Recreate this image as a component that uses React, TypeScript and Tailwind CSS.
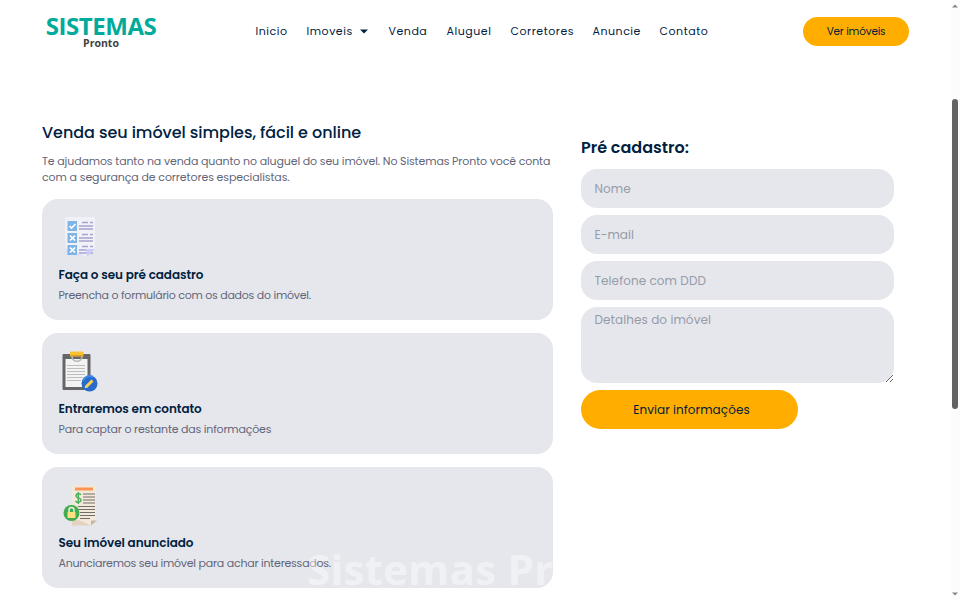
import React from "react";

const menu = [
  { label: "Inicio", style: "w-[51px]" },
  { label: "Imoveis", style: "w-[82px]", caret: true },
  { label: "Venda", style: "w-[58px]" },
  { label: "Aluguel", style: "w-[64px]" },
  { label: "Corretores", style: "w-[82px]" },
  { label: "Anuncie", style: "w-[67px]" },
  { label: "Contato", style: "w-[60px]" },
];

const ChecklistIcon = () => (
  <svg width="40" height="42" viewBox="0 0 40 42" className="block">
    <path d="M6 1h30v33l-8 7-22-3c2-6 0-12 0-18z" fill="#f1f2f8" />
    <path d="M6 32c7 3 15 5 22 9l-22-2z" fill="#dfe3fb" />
    {[5, 17, 29].map((y) => (
      <g key={y}>
        <rect x="8.500" y={y} width="9.500" height="10" fill="#7fb4e4" />
        <path d={`M20 ${y + 5}h14M20 ${y + 8}h14`} stroke="#a6a4ce" strokeWidth="1.400" />
        <path d={`M23 ${y + 1.5}h6m2 0h3`} stroke="#a6a4ce" strokeWidth="1.300" />
      </g>
    ))}
    <path d="M10.500 10l2 2 4-4" fill="none" stroke="#fff" strokeWidth="1.600" />
    <path d="M11 19.500l5 5m0-5l-5 5M11 31.500l5 5m0-5l-5 5" stroke="#fff" strokeWidth="1.700" />
    <path d="M27 33h9l-8 8z" fill="#ccccf8" />
  </svg>
);

const ClipboardIcon = () => (
  <svg width="40" height="42" viewBox="0 -1 40 42" className="block">
    <rect x="3.500" y="3" width="28" height="36" rx="1" fill="#666" />
    <rect x="6.500" y="8" width="22" height="28" fill="#f3f3f3" />
    <path d="M8 14.500h18M8 17.500h18M8 20.500h18M8 23.500h18M8 26.500h16M8 29.500h14" stroke="#bdbdbd" strokeWidth="1" />
    <path d="M13 5c0 7 10 7 10 0" fill="none" stroke="#b6b6b6" strokeWidth="1.600" />
    <rect x="11" y="0.500" width="13.500" height="5" rx="1" fill="#f9c02f" />
    <path d="M12 4.500h12" stroke="#df9b24" />
    <circle cx="30.500" cy="32.500" r="8" fill="#286bcd" />
    <path d="M24 30a7 7 0 0 1 10-4" fill="none" stroke="#3f87e4" strokeWidth="2" />
    <path d="M27 36l6.500-6.500" stroke="#ffd04b" strokeWidth="3" />
    <path d="M25.800 37.300l.6-2.200 1.600 1.500z" fill="#fff0d0" />
  </svg>
);

const ContractIcon = () => (
  <svg width="40" height="42" viewBox="-1 -0.500 40 42" className="block">
    <path d="M12 1h24v34l-5 6H12z" fill="#f3e9da" />
    <path d="M12 33c6 3 12 4 19 8H12z" fill="#e2d3bf" />
    <path d="M31 41v-5h6z" fill="#c8b7a4" />
    <rect x="15" y="3" width="18" height="3" fill="#fb9354" />
    <path d="M23 9.500h12M23 12.500h12M23 15.500h12M23 18.500h12M18 22h17M18 25h17M20 28h15M20 31h15M20 34h10" stroke="#706f6b" strokeWidth="1.200" />
    <path d="M21 10.500c-1-2-5-1.500-5 1s5 1.500 5 4-4 3-5.500 1M18.300 7.500v12" fill="none" stroke="#4cb25b" strokeWidth="1.500" />
    <circle cx="11.500" cy="28.500" r="8" fill="#43ab51" />
    <path d="M9 28v-2.500a2.500 2.500 0 0 1 5 0V28" fill="none" stroke="#e8f2df" strokeWidth="1.500" />
    <rect x="7.500" y="27.500" width="8" height="6" rx=".7" fill="#ffe184" />
  </svg>
);

const steps = [
  {
    icon: <ChecklistIcon />,
    title: "Faça o seu pré cadastro",
    text: "Preencha o formulário com os dados do imóvel.",
    textStyle: "tracking-[-0.25px]",
  },
  {
    icon: <ClipboardIcon />,
    title: "Entraremos em contato",
    text: "Para captar o restante das informações",
    textStyle: "tracking-[-0.2px]",
  },
  {
    icon: <ContractIcon />,
    title: "Seu imóvel anunciado",
    text: "Anunciaremos seu imóvel para achar interessados.",
    textStyle: "tracking-[-0.23px]",
  },
];

const fields = [
  { placeholder: "Nome", type: "text" },
  { placeholder: "E-mail", type: "email" },
  { placeholder: "Telefone com DDD", type: "tel" },
];

const Header = () => (
  <header className="flex h-[62px] items-start">
    <div className="ml-[42px] mt-[13px] flex w-[118px] flex-col items-center font-['Open_Sans',sans-serif] font-bold">
      <span className="text-[24px] leading-[25px] tracking-[-0.45px] text-[#00ab9b]">SISTEMAS</span>
      <span className="text-[10.5px] leading-[10px] text-[#414141]">Pronto</span>
    </div>
    <nav className="ml-[95.5px] mt-[23px] flex text-[11px] leading-4 tracking-[0.53px]">
      {menu.map((item) => (
        <a key={item.label} href="#" className={`flex shrink-0 items-center whitespace-nowrap ${item.style}`}>
          {item.label}
          {item.caret && (
            <svg width="8" height="5" viewBox="0 0 8 5" className="ml-[7px]">
              <path d="M0 .5h8L4 4.500z" fill="#00213f" />
            </svg>
          )}
        </a>
      ))}
    </nav>
    <button className="ml-[83.5px] mt-[17px] h-[29px] w-[106px] rounded-full bg-[#ffae00] pt-px text-[10.5px] tracking-[-0.2px]">
      Ver imóveis
    </button>
  </header>
);

const Scrollbar = () => (
  <div className="flex w-[9px] shrink-0 flex-col items-start bg-[#fcfcfc] pl-px">
    <svg width="6" height="4" viewBox="0 0 6 4" className="mt-1">
      <path d="M0 3.500L3 .5l3 3z" fill="#858585" />
    </svg>
    <div className="mt-[91px] h-[310px] w-[6px] rounded-full bg-[#636363]" />
    <svg width="6" height="4" viewBox="0 0 6 4" className="mt-[183px]">
      <path d="M0 .5h6l-3 3z" fill="#858585" />
    </svg>
  </div>
);

const App = () => {
  return (
    <div className="relative flex h-[600px] w-[960px] overflow-hidden bg-white font-['Poppins','Inter',sans-serif] text-[#00213f]">
      <div className="w-[951px] shrink-0">
        <Header />

        <main className="flex">
          {/* Steps */}
          <section className="ml-[42px] w-[511px] pt-[59px]">
            <h2 className="whitespace-nowrap text-[16px] font-medium leading-6 tracking-[-0.05px]">
              Venda seu imóvel simples, fácil e online
            </h2>
            <p className="mt-[8px] whitespace-nowrap text-[11px] leading-4 tracking-[-0.13px] text-[#626579]">
              Te ajudamos tanto na venda quanto no aluguel do seu imóvel. No Sistemas Pronto você conta
              <br />
              <span className="tracking-[-0.1px]">com a segurança de corretores especialistas.</span>
            </p>
            <div className="mt-[14px] flex flex-col gap-[13px]">
              {steps.map((step) => (
                <div key={step.title} className="h-[121px] rounded-2xl bg-[#e6e7ec] pl-[16.5px] pt-[17px]">
                  <div>{step.icon}</div>
                  <h3 className="mt-[9px] whitespace-nowrap text-[12px] font-semibold leading-4 tracking-[-0.07px]">
                    {step.title}
                  </h3>
                  <p className={`mt-[4px] whitespace-nowrap text-[11px] leading-4 text-[#626579] ${step.textStyle}`}>
                    {step.text}
                  </p>
                </div>
              ))}
            </div>
          </section>

          {/* Form */}
          <form className="ml-[28px] flex w-[313px] flex-col pt-[74px]">
            <h2 className="text-[16px] font-semibold leading-6">Pré cadastro:</h2>
            <div className="mt-[9px] flex flex-col gap-[7px] text-[12px] tracking-[0.08px]">
              {fields.map((field) => (
                <input
                  key={field.placeholder}
                  type={field.type}
                  placeholder={field.placeholder}
                  className="h-[39px] rounded-2xl bg-[#e6e7ec] px-[13.5px] outline-none placeholder:text-[#969ba8]"
                />
              ))}
              <textarea
                placeholder="Detalhes do imóvel"
                className="h-[76px] rounded-2xl bg-[#e6e7ec] px-[13.5px] pt-[4px] leading-[18px] outline-none placeholder:text-[#969ba8]"
              />
              <button type="button" className="h-[39px] w-[217px] rounded-full bg-[#ffae00] pl-[4px] text-[12px]">
                Enviar informações
              </button>
            </div>
          </form>
        </main>
      </div>

      <Scrollbar />

      {/* Watermark */}
      <span className="pointer-events-none absolute left-[307px] top-[540px] whitespace-nowrap font-['Open_Sans',sans-serif] text-[42px] font-bold leading-[58px] tracking-[0.25px] text-white/45">
        Sistemas Pronto
      </span>
    </div>
  );
};

export default App;
